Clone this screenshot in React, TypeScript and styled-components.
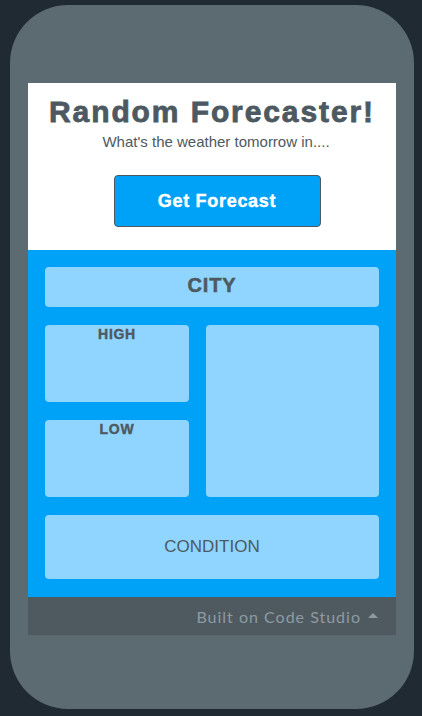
import React from "react";
import styled, { createGlobalStyle } from "styled-components";

const Global = createGlobalStyle`
  html, body { margin: 0; padding: 0; background: #1f2a33; }
  body { width: 422px; height: 716px; overflow: hidden; }
`;

const Stage = styled.div`
  width: 422px;
  height: 716px;
  padding: 5px 8px 7px 10px;
  box-sizing: border-box;
  display: flex;
`;

const Phone = styled.div`
  width: 404px;
  height: 704px;
  background: #5c6a71;
  border-radius: 58px;
  padding: 78px 18px 0 18px;
  box-sizing: border-box;
  display: flex;
  flex-direction: column;
`;

const Screen = styled.div`
  width: 368px;
  display: flex;
  flex-direction: column;
`;

const Header = styled.div`
  background: #ffffff;
  height: 167px;
  display: flex;
  flex-direction: column;
  align-items: center;
  font-family: "Liberation Sans", Arial, sans-serif;
`;

const Title = styled.h1`
  margin: 12px 0 0 0;
  font-size: 30px;
  line-height: 34px;
  font-weight: 700;
  letter-spacing: 1.9px;
  -webkit-text-stroke: 0.8px #4d5960;
  color: #4d5960;
  white-space: nowrap;
`;

const Subtitle = styled.div`
  margin-top: 4px;
  margin-left: 8px;
  font-size: 15px;
  line-height: 18px;
  color: #4d5960;
`;

const Button = styled.button`
  margin-top: 24px;
  margin-left: 10px;
  width: 207px;
  height: 52px;
  background: #00a2f8;
  border: 1px solid #4d5960;
  border-radius: 4px;
  color: #ffffff;
  font-family: "Liberation Sans", Arial, sans-serif;
  font-weight: 700;
  font-size: 18px;
  letter-spacing: 0.7px;
  -webkit-text-stroke: 0.4px #ffffff;
  cursor: pointer;
  padding: 0;
`;

const Board = styled.div`
  background: #00a2f8;
  height: 347px;
  padding: 17px 17px 0 17px;
  box-sizing: border-box;
  display: grid;
  grid-template-columns: 144px 173px;
  grid-template-rows: 40px 77px 77px 64px;
  column-gap: 17px;
  row-gap: 18px;
  font-family: "Liberation Sans", Arial, sans-serif;
  color: #4d5960;
`;

const Card = styled.div<{ $col: string; $row: string; $align?: string }>`
  background: #8fd5ff;
  border-radius: 4px;
  display: flex;
  justify-content: center;
  align-items: ${(p) => p.$align || "center"};
  grid-column: ${(p) => p.$col};
  grid-row: ${(p) => p.$row};
`;

const CityLabel = styled.span`
  font-size: 20px;
  font-weight: 700;
  letter-spacing: 0.8px;
  -webkit-text-stroke: 0.5px #4d5960;
  margin-top: -4px;
`;

const SmallLabel = styled.span`
  font-size: 14px;
  font-weight: 700;
  letter-spacing: 0.7px;
  -webkit-text-stroke: 0.4px #4d5960;
  margin-top: 1px;
`;

const ConditionLabel = styled.span`
  font-size: 17px;
  margin-top: -1px;
`;

const Footer = styled.div`
  background: #4f5a60;
  height: 38px;
  display: flex;
  align-items: center;
  justify-content: flex-end;
  padding-right: 18px;
  gap: 7px;
  font-family: "Lato", "Noto Sans", sans-serif;
  font-size: 16px;
  color: #8e9aa0;
  letter-spacing: 1px;
`;

const Caret = styled.span`
  width: 0;
  height: 0;
  border-left: 5px solid transparent;
  border-right: 5px solid transparent;
  border-bottom: 5px solid #8e9aa0;
  margin-top: -2px;
`;

export default function App() {
  return (
    <>
      <Global />
      <Stage>
        <Phone>
          <Screen>
            <Header>
              <Title>Random Forecaster!</Title>
              <Subtitle>What's the weather tomorrow in....</Subtitle>
              <Button>Get Forecast</Button>
            </Header>
            <Board>
              <Card $col="1 / span 2" $row="1">
                <CityLabel>CITY</CityLabel>
              </Card>
              <Card $col="1" $row="2" $align="flex-start">
                <SmallLabel>HIGH</SmallLabel>
              </Card>
              <Card $col="2" $row="2 / span 2" />
              <Card $col="1" $row="3" $align="flex-start">
                <SmallLabel>LOW</SmallLabel>
              </Card>
              <Card $col="1 / span 2" $row="4">
                <ConditionLabel>CONDITION</ConditionLabel>
              </Card>
            </Board>
            <Footer>
              <span>Built on Code Studio</span>
              <Caret />
            </Footer>
          </Screen>
        </Phone>
      </Stage>
    </>
  );
}
